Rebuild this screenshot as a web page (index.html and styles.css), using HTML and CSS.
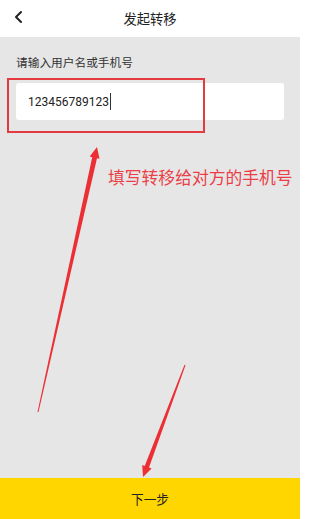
FILE: index.html
```html
<!DOCTYPE html>
<html lang="zh">
<head>
<meta charset="utf-8">
<link rel="stylesheet" href="styles.css">
</head>
<body>
<div class="page">
  <header class="topbar">
    <svg class="back" width="10" height="14" viewBox="0 0 10 14"><path d="M7 2 L2 7 L7 12" fill="none" stroke="#222" stroke-width="2" stroke-linecap="round" stroke-linejoin="round"/></svg>
    <div class="title">发起转移</div>
  </header>
  <main class="content">
    <div class="label">请输入用户名或手机号</div>
    <div class="input"><span class="value">123456789123</span><span class="caret"></span></div>
  </main>
  <footer class="next">下一步</footer>

  <div class="mark-box"></div>
  <div class="note">填写转移给对方的手机号</div>
  <svg class="arrows" width="300" height="519" viewBox="0 0 300 519">
    <polygon fill="#ec2f35" points="97,147 99.5,158.8 97,158.3 38.5,412.1 37.5,411.9 92.2,157.2 89.7,156.6"/>
    <polygon fill="#ec2f35" points="143,477 142.2,464.9 144.7,465.9 184.5,364.8 185.5,365.2 149,467.5 151.6,468.5"/>
  </svg>
</div>
</body>
</html>
```
FILE: styles.css
```css
html, body {
  margin: 0;
  padding: 0;
}
body {
  font-family: "Noto Sans CJK SC", "Noto Sans", sans-serif;
  color: #222;
}
.page {
  position: relative;
  width: 300px;
  height: 519px;
  display: flex;
  flex-direction: column;
  background: #e6e6e6;
  overflow: hidden;
}
.topbar {
  height: 37px;
  background: #fff;
  display: flex;
  align-items: center;
  justify-content: center;
  position: relative;
  flex: none;
}
.back {
  position: absolute;
  left: 14px;
  top: 10px;
}
.title {
  font-size: 13.3px;
  color: #222;
  line-height: 20px;
}
.content {
  flex: 1;
  padding: 17px 16px 0 16px;
  display: flex;
  flex-direction: column;
}
.label {
  font-size: 11.7px;
  line-height: 16px;
  color: #333;
}
.input {
  margin-top: 13px;
  height: 37px;
  background: #fff;
  border-radius: 3px;
  display: flex;
  align-items: center;
  padding-left: 12px;
}
.value {
  font-family: Roboto, "Noto Sans", sans-serif;
  font-size: 12px;
  color: #222;
}
.caret {
  width: 1px;
  height: 17px;
  background: #333;
  margin-left: 1px;
}
.next {
  height: 41px;
  flex: none;
  background: #ffd600;
  display: flex;
  align-items: center;
  justify-content: center;
  font-size: 12.7px;
  color: #222;
}
.mark-box {
  position: absolute;
  left: 7px;
  top: 78px;
  width: 194px;
  height: 51px;
  border: 2px solid #e23a3f;
}
.note {
  position: absolute;
  left: 108px;
  top: 166px;
  font-size: 16.8px;
  line-height: 22px;
  color: #ea3f47;
  white-space: nowrap;
}
.arrows {
  position: absolute;
  left: 0;
  top: 0;
}
```
